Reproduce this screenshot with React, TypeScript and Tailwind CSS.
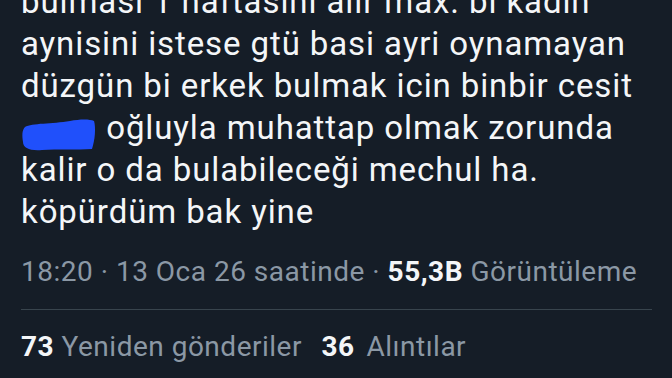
export default function App() {
  return (
    <div className="w-[672px] h-[378px] overflow-hidden bg-[#151d27] font-['Roboto',sans-serif]">
      <div className="pl-[21px] pr-2">
        <div className="-mt-[19px] text-[33px] leading-[42px] text-[#f4f6f8] tracking-[0.9px] whitespace-nowrap">
          <p>bulmasi 1 haftasini alir max. bi kadin</p>
          <p>aynisini istese gtü basi ayri oynamayan</p>
          <p>düzgün bi erkek bulmak icin binbir cesit</p>
          <p className="relative">
            <span className="inline-block w-[67px]" />ı oğluyla muhattap olmak zorunda
            <svg
              className="absolute left-[1px] top-[12px]"
              width="74"
              height="32"
              viewBox="0 0 74 32"
            >
              <path
                d="M3 8 C10 4 30 5 48 2 C58 0 68 0 72 2 C74 9 73 21 70 30 C55 31 35 30 20 31 C8 32 1 29 1 23 C0 16 0 11 3 8 Z"
                fill="#2050fb"
              />
            </svg>
          </p>
          <p>kalir o da bulabileceği mechul ha.</p>
          <p>köpürdüm bak yine</p>
        </div>
        <div className="mt-[23px] text-[28px] leading-[32px] text-[#8b98a5] tracking-[0.5px] whitespace-nowrap">
          18:20 · 13 Oca 26 saatinde · <span className="font-bold text-[#f4f6f8]">55,3B</span> Görüntüleme
        </div>
        <div className="mt-[21px] h-px bg-[#38444d] mr-[12px]" />
        <div className="mt-[21px] text-[28px] leading-[32px] text-[#8b98a5] tracking-[0.5px] whitespace-nowrap">
          <span className="font-bold text-[#f4f6f8]">73</span> Yeniden gönderiler{" "}
          <span className="ml-[12px] font-bold text-[#f4f6f8]">36</span>
          <span className="ml-[12px]">Alıntılar</span>
        </div>
      </div>
    </div>
  );
}
